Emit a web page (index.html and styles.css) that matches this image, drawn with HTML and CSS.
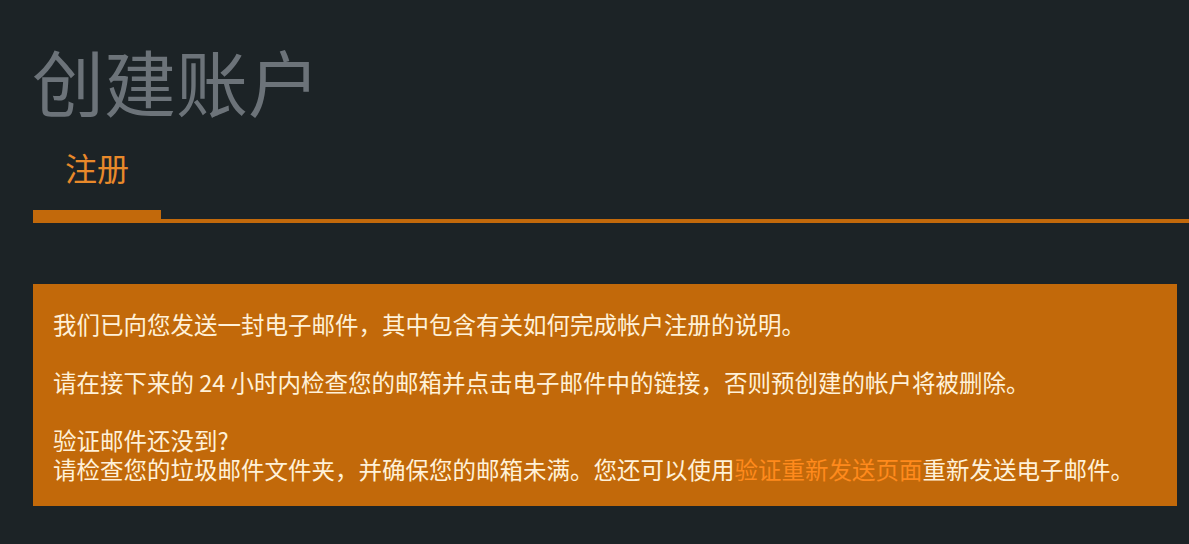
FILE: index.html
```html
<!DOCTYPE html>
<html lang="zh-CN">
<head>
<meta charset="utf-8">
<title>创建账户</title>
<link rel="stylesheet" href="styles.css">
</head>
<body>
<main class="page">
  <h1 class="title">创建账户</h1>
  <nav class="tabs">
    <div class="tab tab-active">注册</div>
    <div class="tab-rest"></div>
  </nav>
  <section class="notice">
    <p>我们已向您发送一封电子邮件，其中包含有关如何完成帐户注册的说明。</p>
    <p>请在接下来的 24 小时内检查您的邮箱并点击电子邮件中的链接，否则预创建的帐户将被删除。</p>
    <p>验证邮件还没到?<br>请检查您的垃圾邮件文件夹，并确保您的邮箱未满。您还可以使用<a class="link" href="#">验证重新发送页面</a>重新发送电子邮件。</p>
  </section>
</main>
</body>
</html>
```
FILE: styles.css
```css
html, body {
  margin: 0;
  padding: 0;
  background: #1c2326;
  height: 100%;
}

body {
  font-family: "Noto Sans CJK SC", "Noto Sans", sans-serif;
}

.page {
  padding: 38px 12px 0 32px;
  display: flex;
  flex-direction: column;
}

.title {
  margin: 0;
  font-size: 72px;
  line-height: 84px;
  font-weight: 400;
  color: #6c7379;
}

.tabs {
  display: flex;
  align-items: flex-end;
  margin-top: 25px;
  margin-right: -12px;
  margin-left: 1px;
}

.tab {
  padding: 0 32px 23px;
  font-size: 32px;
  line-height: 40px;
  color: #e8892a;
}

.tab-active {
  border-bottom: 13px solid #c2690b;
}

.tab-rest {
  flex: 1;
  border-bottom: 4px solid #c2690b;
}

.notice {
  margin-top: 61px;
  margin-left: 1px;
  background: #c2690a;
  padding: 26px 20px 22px;
  color: #fff1d8;
  font-size: 23.5px;
  line-height: 29px;
}

.notice p {
  margin: 0 0 29px;
}

.notice p:last-child {
  margin-bottom: 0;
}

.link {
  color: #ff8a1c;
  text-decoration: none;
}
```
